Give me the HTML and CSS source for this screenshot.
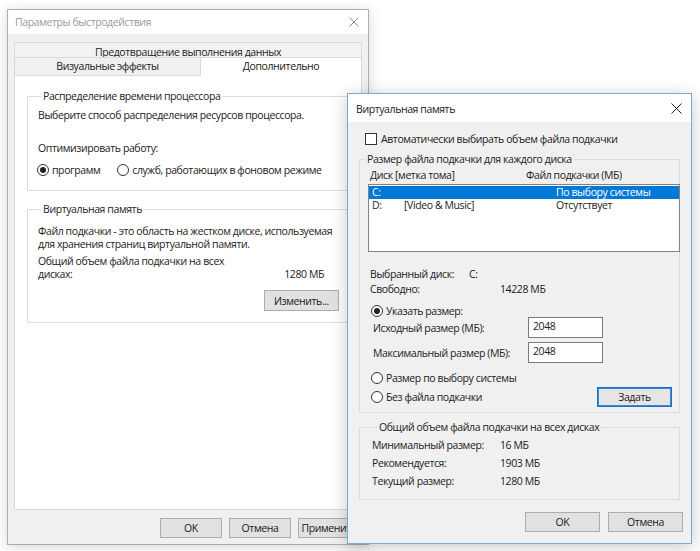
FILE: index.html
```html
<!DOCTYPE html>
<html lang="ru">
<head>
<meta charset="utf-8">
<title>Параметры быстродействия</title>
<link rel="stylesheet" href="styles.css">
</head>
<body>
<div class="desk">

  <section class="win win-perf">
    <header class="titlebar">
      <span class="title">Параметры быстродействия</span>
      <svg class="close" width="10" height="10" viewBox="0 0 10 10"><path d="M0.5 0.5L9.5 9.5M9.5 0.5L0.5 9.5" stroke="currentColor" stroke-width="1" fill="none"/></svg>
    </header>
    <div class="perf-body">
      <div class="tabs">
        <div class="tabrow-back">Предотвращение выполнения данных</div>
        <div class="tabrow-front">
          <div class="tab">Визуальные эффекты</div>
          <div class="tab active">Дополнительно</div>
        </div>
        <div class="panel">
          <fieldset class="group g-cpu">
            <legend>Распределение времени процессора</legend>
            <p class="cpu-l1">Выберите способ распределения ресурсов процессора.</p>
            <p class="cpu-l2">Оптимизировать работу:</p>
            <div class="cpu-radios">
              <span class="radio"><span class="rb on"></span>программ</span>
              <span class="radio r2"><span class="rb"></span>служб, работающих в фоновом режиме</span>
            </div>
          </fieldset>
          <fieldset class="group g-vm">
            <legend>Виртуальная память</legend>
            <p class="vm-p1">Файл подкачки - это область на жестком диске, используемая<br>для хранения страниц виртуальной памяти.</p>
            <div class="vm-total">
              <span>Общий объем файла подкачки на всех<br>дисках:</span>
              <span class="vm-val">1280 МБ</span>
            </div>
            <div class="vm-btnrow"><button class="btn btn-change">Изменить...</button></div>
          </fieldset>
        </div>
      </div>
      <div class="perf-buttons">
        <button class="btn pb">OK</button>
        <button class="btn pb">Отмена</button>
        <button class="btn pb">Применить</button>
      </div>
    </div>
  </section>

  <section class="win win-vm">
    <header class="titlebar">
      <span class="title">Виртуальная память</span>
      <svg class="close" width="11" height="11" viewBox="0 0 11 11"><path d="M0.5 0.5L10.5 10.5M10.5 0.5L0.5 10.5" stroke="currentColor" stroke-width="1" fill="none"/></svg>
    </header>
    <div class="vm-body">
      <div class="auto-row"><span class="cb"></span>Автоматически выбирать объем файла подкачки</div>

      <fieldset class="group g-disk">
        <legend>Размер файла подкачки для каждого диска</legend>
        <div class="disk-head"><span class="dh1">Диск [метка тома]</span><span>Файл подкачки (МБ)</span></div>
        <div class="listbox">
          <div class="lrow sel"><span class="c1">C:</span><span class="c2"></span><span>По выбору системы</span></div>
          <div class="lrow"><span class="c1">D:</span><span class="c2">[Video &amp; Music]</span><span>Отсутствует</span></div>
        </div>
        <div class="info i1"><span class="il1">Выбранный диск:</span><span>C:</span></div>
        <div class="info i2"><span class="il2">Свободно:</span><span>14228 МБ</span></div>
        <div class="radio spec"><span class="rb on"></span>Указать размер:</div>
        <div class="size-row s1"><span class="size-lbl">Исходный размер (МБ):</span><span class="input">2048</span></div>
        <div class="size-row s2"><span class="size-lbl">Максимальный размер (МБ):</span><span class="input">2048</span></div>
        <div class="radio sysr"><span class="rb"></span>Размер по выбору системы</div>
        <div class="last-row">
          <span class="radio"><span class="rb"></span>Без файла подкачки</span>
          <button class="btn btn-set">Задать</button>
        </div>
      </fieldset>

      <fieldset class="group g-total">
        <legend>Общий объем файла подкачки на всех дисках</legend>
        <div class="trow t1"><span class="tl">Минимальный размер:</span><span>16 МБ</span></div>
        <div class="trow"><span class="tl">Рекомендуется:</span><span>1903 МБ</span></div>
        <div class="trow"><span class="tl">Текущий размер:</span><span>1280 МБ</span></div>
      </fieldset>

      <div class="vm-buttons">
        <button class="btn vb">OK</button>
        <button class="btn vb">Отмена</button>
      </div>
    </div>
  </section>

</div>
</body>
</html>
```
FILE: styles.css
```css
* { box-sizing: border-box; }
html, body { margin: 0; padding: 0; }
body {
  width: 700px;
  height: 551px;
  overflow: hidden;
  background: #ffffff;
  font-family: "Open Sans", "Noto Sans", "DejaVu Sans", sans-serif;
  font-size: 10.5px;
  letter-spacing: -0.4px;
  color: #222222;
}
p { margin: 0; }
.desk { position: relative; width: 700px; height: 551px; }

/* windows on the desktop */
.win {
  position: absolute;
  display: flex;
  flex-direction: column;
  background: #f0f0f0;
}
.win-perf {
  left: 7px; top: 9px;
  width: 362px; height: 536px;
  border: 1px solid #adadad;
  box-shadow: 0 2px 12px rgba(0,0,0,0.16);
}
.win-vm {
  left: 347px; top: 93px;
  width: 345px; height: 451px;
  border: 1px solid #76a9d9;
  box-shadow: 0 3px 16px rgba(0,0,0,0.22);
}

.titlebar {
  flex: none;
  display: flex;
  align-items: center;
  justify-content: space-between;
  background: #ffffff;
}
.win-perf .titlebar { height: 24px; padding: 0 9px 1px 7px; color: #9a9a9a; }
.win-vm .titlebar { height: 28px; padding: 1px 9px 0 8px; color: #1a1a1a; }
.win-perf .close { color: #8a8a8a; }
.win-vm .close { color: #222; }

/* dialog 1 */
.perf-body {
  flex: 1;
  display: flex;
  flex-direction: column;
  padding: 8px 7px 0 6px;
}
.tabs { width: 348px; }
.tabrow-back {
  height: 15px;
  border: 1px solid #d9d9d9;
  border-bottom: none;
  background: #f2f2f2;
  text-align: center;
  line-height: 16px;
  padding-top: 1px;
}
.tabrow-front { display: flex; height: 18px; }
.tab {
  border: 1px solid #d9d9d9;
  border-bottom: none;
  background: #f0f0f0;
  text-align: center;
  line-height: 17px;
}
.tabrow-front .tab:first-child { width: 186px; border-right: none; }
.tab.active {
  width: 162px;
  height: 19px;
  background: #ffffff;
  position: relative;
  z-index: 1;
}
.panel {
  height: 435px;
  background: #ffffff;
  border: 1px solid #d9d9d9;
  padding-left: 12px;
}

.group {
  margin: 0;
  padding: 0;
  border: 1px solid #dcdcdc;
  min-width: 0;
}
.group legend {
  padding: 0 2px;
  line-height: 14px;
}

.g-cpu { margin-top: 13px; width: 321px; padding: 0 10px 12px 10px; }
.g-cpu legend, .g-vm legend { margin-left: 3px; }
.cpu-l1 { margin-top: 4px; line-height: 16px; white-space: nowrap; }
.cpu-l2 { margin-top: 17px; line-height: 16px; }
.cpu-radios { margin-top: 6px; height: 16px; display: flex; align-items: center; margin-left: -1px; white-space: nowrap; }
.r2 { margin-left: 17px; }

.radio { display: flex; align-items: center; gap: 3px; white-space: nowrap; }
.rb {
  flex: none;
  width: 12px; height: 12px;
  border: 1px solid #333;
  border-radius: 50%;
  background: #fff;
  display: flex;
  align-items: center;
  justify-content: center;
}
.rb.on::after {
  content: "";
  width: 6px; height: 6px;
  border-radius: 50%;
  background: #222;
}

.g-vm { margin-top: 11px; width: 321px; padding: 0 8px 11px 10px; }
.vm-p1 { margin-top: 9px; line-height: 13px; white-space: nowrap; }
.vm-total {
  margin-top: 4px;
  line-height: 13px;
  display: flex;
  justify-content: space-between;
  align-items: flex-end;
  padding-right: 15px;
  white-space: nowrap;
}
.vm-btnrow { margin-top: 9px; display: flex; justify-content: flex-end; }

.btn {
  font: inherit;
  letter-spacing: inherit;
  color: #1a1a1a;
  background: #e1e1e1;
  border: 1px solid #adadad;
  padding: 0;
  margin: 0;
  white-space: nowrap;
  overflow: hidden;
}
.btn-change { width: 75px; height: 21px; }

.perf-buttons {
  margin-top: 8px;
  display: flex;
  justify-content: flex-end;
  gap: 7px;
  padding-right: 1px;
}
.pb { width: 62px; height: 20px; }

/* dialog 2 */
.vm-body {
  flex: 1;
  display: flex;
  flex-direction: column;
  padding: 0 8px 0 11px;
}
.auto-row {
  margin-top: 10px;
  padding-left: 6px;
  line-height: 14px;
  display: flex;
  align-items: center;
  gap: 4px;
  white-space: nowrap;
}
.cb {
  width: 12px; height: 12px;
  border: 1px solid #333;
  background: #fff;
  flex: none;
}
.g-disk, .g-total { width: 321px; }
.g-disk { margin-top: 6px; padding: 0 0 5px 0; }
.g-disk legend, .g-total legend { margin-left: 5px; }
.disk-head { margin-top: 2px; line-height: 14px; padding-left: 10px; display: flex; white-space: nowrap; }
.dh1 { width: 156px; }
.listbox {
  margin-top: 2px;
  margin-left: 8px;
  width: 312px;
  height: 68px;
  background: #fff;
  border: 1px solid #828282;
  padding-top: 1px;
}
.lrow { height: 13px; line-height: 13px; display: flex; padding-left: 3px; white-space: nowrap; }
.lrow.sel { background: #0078d7; color: #fff; }
.lrow .c1 { width: 32px; }
.lrow .c2 { width: 152px; }
.info { line-height: 14px; padding-left: 10px; display: flex; white-space: nowrap; }
.i1 { margin-top: 15px; }
.i2 { margin-top: 1px; }
.il1 { width: 99px; }
.il2 { width: 130px; }
.spec { margin-top: 8px; height: 13px; padding-left: 11px; }
.size-row { height: 21px; display: flex; align-items: center; padding-left: 13px; white-space: nowrap; }
.s2 { margin-top: 4px; }
.size-lbl { width: 155px; }
.input {
  width: 75px; height: 21px;
  background: #fff;
  border: 1px solid #7a7a7a;
  padding: 1px 0 0 4px;
  line-height: 15px;
}
.sysr { margin-top: 8px; height: 13px; padding-left: 11px; }
.last-row {
  margin-top: 3px;
  height: 20px;
  display: flex;
  align-items: center;
  justify-content: space-between;
  padding-left: 11px;
  padding-right: 7px;
}
.btn-set {
  width: 75px; height: 20px;
  border: 1px solid #1f6fc0;
  box-shadow: inset 0 0 0 1px #3c88d4;
  background: #e5e5e5;
}

.g-total { margin-top: 7px; padding: 2px 0 9px 12px; }
.trow { line-height: 18px; display: flex; white-space: nowrap; }
.tl { width: 128px; }

.vm-buttons {
  margin-top: 12px;
  display: flex;
  justify-content: flex-end;
  gap: 8px;
}
.vb { width: 75px; height: 20px; }
```
